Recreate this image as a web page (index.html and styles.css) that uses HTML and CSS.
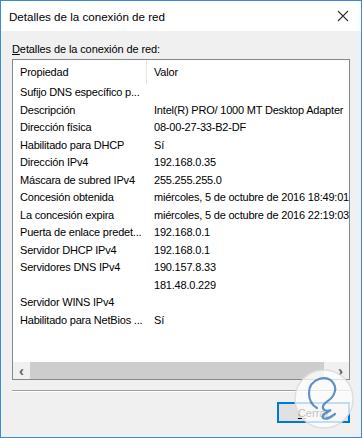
FILE: index.html
```html
<!DOCTYPE html>
<html>
<head>
  <meta charset="UTF-8">
  <title>Detalles de la conexión de red</title>
  <link rel="stylesheet" href="styles.css">
</head>
<body>
  <div class="window">
    <div class="titlebar">
      <span class="title">Detalles de la conexión de red</span>
      <svg class="close" width="12" height="12" viewBox="0 0 12 12">
        <path d="M1 1 L11 11 M11 1 L1 11" stroke="#333" stroke-width="1.1" fill="none"/>
      </svg>
    </div>

    <div class="content">
      <div class="label"><u>D</u>etalles de la conexión de red:</div>

      <div class="listbox">
        <div class="row head">
          <div class="c1">Propiedad</div>
          <div class="c2">Valor</div>
        </div>
        <div class="row"><div class="c1">Sufijo DNS específico p...</div><div class="c2"></div></div>
        <div class="row"><div class="c1">Descripción</div><div class="c2">Intel(R) PRO/ 1000 MT Desktop Adapter</div></div>
        <div class="row"><div class="c1">Dirección física</div><div class="c2">08-00-27-33-B2-DF</div></div>
        <div class="row"><div class="c1">Habilitado para DHCP</div><div class="c2">Sí</div></div>
        <div class="row"><div class="c1">Dirección IPv4</div><div class="c2">192.168.0.35</div></div>
        <div class="row"><div class="c1">Máscara de subred IPv4</div><div class="c2">255.255.255.0</div></div>
        <div class="row"><div class="c1">Concesión obtenida</div><div class="c2">miércoles, 5 de octubre de 2016 18:49:01</div></div>
        <div class="row"><div class="c1">La concesión expira</div><div class="c2">miércoles, 5 de octubre de 2016 22:19:03</div></div>
        <div class="row"><div class="c1">Puerta de enlace predet...</div><div class="c2">192.168.0.1</div></div>
        <div class="row"><div class="c1">Servidor DHCP IPv4</div><div class="c2">192.168.0.1</div></div>
        <div class="row"><div class="c1">Servidores DNS IPv4</div><div class="c2">190.157.8.33</div></div>
        <div class="row"><div class="c1"></div><div class="c2">181.48.0.229</div></div>
        <div class="row"><div class="c1">Servidor WINS IPv4</div><div class="c2"></div></div>
        <div class="row"><div class="c1">Habilitado para NetBios ...</div><div class="c2">Sí</div></div>

        <div class="spacer"></div>

        <div class="hscroll">
          <span class="arrow">&#8249;</span>
          <div class="thumb"></div>
          <span class="arrow">&#8250;</span>
        </div>
      </div>

      <div class="separator"></div>

      <div class="buttons">
        <button class="btn" type="button"><u>C</u>errar</button>
      </div>
    </div>

    <svg class="logo" width="62" height="64" viewBox="0 0 62 64">
      <circle cx="31" cy="31" r="29" fill="rgba(255,255,255,0.75)" stroke="rgba(220,220,220,0.9)" stroke-width="1.5"/>
      <path d="M24 40 C14 34 12 16 26 11 C38 7 46 18 40 28 C37 33 32 33 30 38 C29 42 33 44 38 42 C33 45 28 47 30 50 C34 52 38 49 42 46"
            fill="none" stroke="#3a78b8" stroke-width="2.2" stroke-linecap="round" opacity="0.8"/>
    </svg>
  </div>
</body>
</html>
```

FILE: styles.css
```css
body {
  margin: 0;
  font-family: "Liberation Sans", Arial, sans-serif;
  font-size: 11px;
  color: #000;
}

.window {
  position: relative;
  width: 362px;
  height: 438px;
  box-sizing: border-box;
  border: 1px solid #3c8ad6;
  background: #f0f0f0;
  display: flex;
  flex-direction: column;
}

.titlebar {
  height: 30px;
  background: #fff;
  display: flex;
  align-items: center;
  justify-content: space-between;
  padding: 0 12px 0 8px;
}
.title {
  font-size: 11.6px;
}

.content {
  flex: 1;
  display: flex;
  flex-direction: column;
  padding: 0 11px;
}

.label {
  margin-top: 11px;
  height: 17px;
  line-height: 14px;
  letter-spacing: -0.1px;
}
.label u, .btn u {
  text-decoration: underline;
}

.listbox {
  height: 321px;
  box-sizing: border-box;
  border: 1px solid #828790;
  background: #fff;
  display: flex;
  flex-direction: column;
  overflow: hidden;
}

.row {
  display: flex;
  height: 17.5px;
  line-height: 17.5px;
  white-space: nowrap;
  letter-spacing: -0.2px;
}
.row.head {
  height: 24px;
  line-height: 24px;
}
.c1 {
  width: 134px;
  flex: none;
  box-sizing: border-box;
  padding-left: 7px;
  overflow: hidden;
}
.c2 {
  padding-left: 7px;
}
.head .c1 {
  border-right: 1px solid #e5e5e5;
}

.spacer {
  flex: 1;
}

.hscroll {
  height: 17px;
  background: #f0f0f0;
  display: flex;
  align-items: center;
}
.arrow {
  width: 17px;
  text-align: center;
  font-size: 15px;
  font-weight: bold;
  color: #606060;
  line-height: 17px;
}
.thumb {
  flex: 1;
  height: 17px;
  background: #cdcdcd;
  margin-right: 8px;
}

.separator {
  margin-top: 10px;
  border-top: 1px solid #a0a0a0;
  border-bottom: 1px solid #fff;
}

.buttons {
  display: flex;
  justify-content: flex-end;
  margin-top: 10px;
}
.btn {
  width: 73px;
  height: 21px;
  box-sizing: border-box;
  border: 2px solid #0078d7;
  background: #e1e1e1;
  font-family: "Liberation Sans", Arial, sans-serif;
  font-size: 11px;
  color: #000;
  padding: 0;
}

.logo {
  position: absolute;
  left: 292px;
  top: 367px;
}
```
